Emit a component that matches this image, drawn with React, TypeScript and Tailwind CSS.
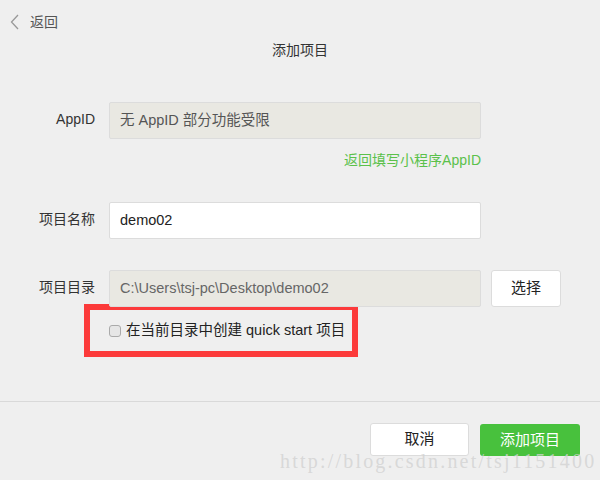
export default function App() {
  const font = { fontFamily: '"Liberation Sans", "Noto Sans CJK SC", sans-serif' };

  return (
    <div
      className="relative w-[600px] h-[480px] overflow-hidden bg-[#efefef] text-[14px] text-[#333]"
      style={font}
    >
      {/* header */}
      <div className="flex items-center h-[44px] pl-[10px] text-[#555]">
        <svg width="10" height="16" viewBox="0 0 10 16" className="mr-[10px]">
          <path d="M8 1 L1.5 8 L8 15" fill="none" stroke="#999" strokeWidth="1.3" />
        </svg>
        <span>返回</span>
      </div>
      <div className="text-center leading-[14px] -mt-[1px]">添加项目</div>

      {/* form */}
      <div className="pt-[45px]">
        <div className="flex items-center h-[37px]">
          <div className="w-[95px] text-right -mt-[3px]">AppID</div>
          <div className="ml-[14px] w-[372px] h-[37px] flex items-center px-[10px] bg-[#e9e8e2] border border-[#dcdcdc] rounded-[2px] text-[14.5px] text-[#555]">
            无 AppID 部分功能受限
          </div>
        </div>
        <div className="w-[481px] text-right mt-[13px] leading-[16px] text-[#5bc14b]">
          返回填写小程序AppID
        </div>

        <div className="flex items-center h-[37px] mt-[34px]">
          <div className="w-[95px] text-right -mt-[3px]">项目名称</div>
          <div className="ml-[14px] w-[372px] h-[37px] flex items-center px-[10px] bg-white border border-[#dcdcdc] rounded-[2px] text-[14.5px] text-[#222]">
            demo02
          </div>
        </div>

        <div className="flex items-center h-[37px] mt-[31px]">
          <div className="w-[95px] text-right -mt-[3px]">项目目录</div>
          <div className="ml-[14px] w-[372px] h-[37px] flex items-center px-[10px] bg-[#e9e8e2] border border-[#dcdcdc] rounded-[2px] text-[14.5px] text-[#666]">
            C:\Users\tsj-pc\Desktop\demo02
          </div>
          <button className="ml-[10px] w-[70px] h-[37px] bg-white border border-[#dcdcdc] rounded-[3px] text-[15px] text-[#222]">
            选择
          </button>
        </div>

        <div className="ml-[84px] -mt-[3px] w-[274px] h-[53px] border-[6px] border-[#fc3a3a] flex items-center pl-[19px]">
          <span className="w-[12px] h-[12px] rounded-[3px] border border-[#aaa] bg-[#e6e6e6] mr-[5px]" />
          <span className="text-[14.5px] text-[#222]">在当前目录中创建 quick start 项目</span>
        </div>
      </div>

      {/* footer */}
      <div className="absolute left-0 right-0 top-[401px] border-t border-[#d9d9d9]">
        <div className="flex justify-end pr-[20px] pt-[21px] gap-[11px]">
          <button className="w-[99px] h-[33px] bg-white border border-[#dcdcdc] rounded-[3px] text-[15px] text-[#222]">
            取消
          </button>
          <button className="w-[100px] h-[32px] mt-[1px] bg-[#48c13d] rounded-[3px] text-[15px] text-white">
            添加项目
          </button>
        </div>
      </div>

      {/* watermark */}
      <div
        className="absolute left-[280px] top-[446px] text-[20px] text-[#d2d2d2]/80 tracking-[2.2px]"
        style={{ fontFamily: '"Liberation Serif", "DejaVu Serif", serif' }}
      >
        http://blog.csdn.net/tsj1151400
      </div>
    </div>
  );
}
